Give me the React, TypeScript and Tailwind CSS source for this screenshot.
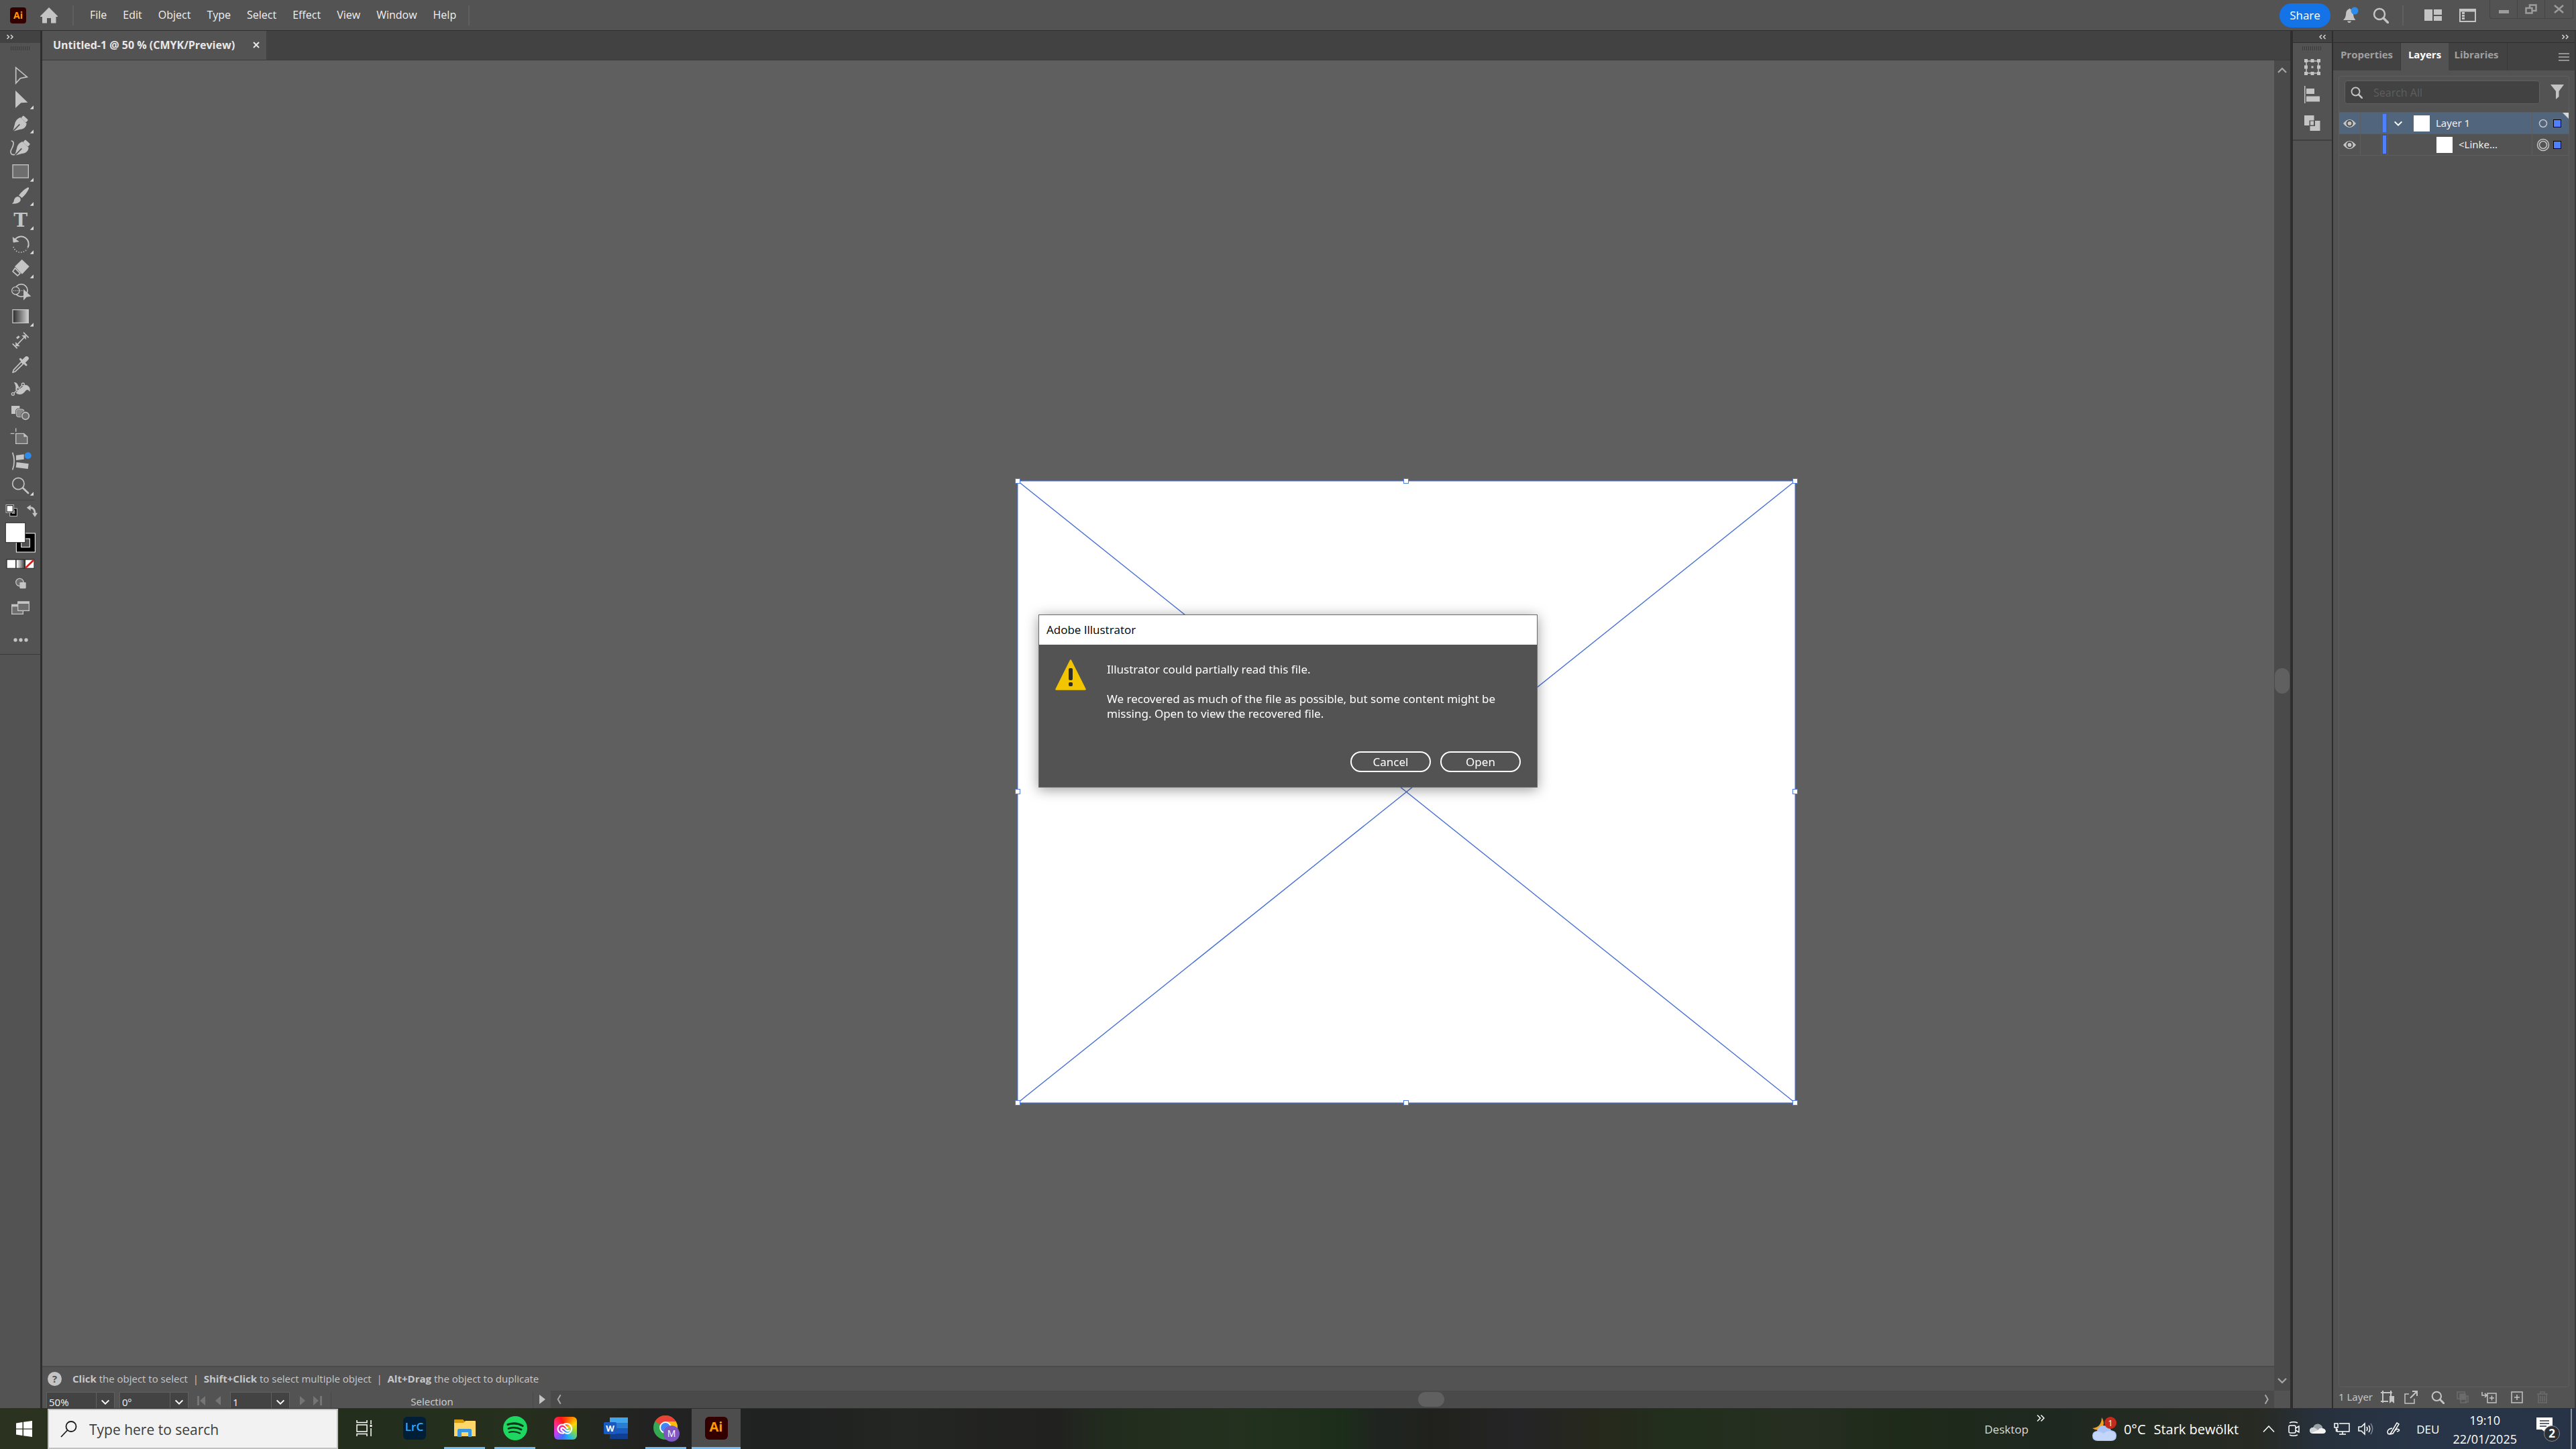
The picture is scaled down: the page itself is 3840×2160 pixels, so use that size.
import type { ReactNode } from "react";

const ICON = "#c4c4c4";

/* ---------- tool bar ---------- */

interface Tool {
  name: string;
  flyout?: boolean;
  icon: ReactNode;
}

const nib = (
  <>
    <path d="M91 27L119 54C117 72 106 79 88 81L57 90L66 58C68 43 77 33 91 27Z" fill={ICON} />
    <path d="M56 91L88 58" stroke="#535353" strokeWidth="5" />
    <rect x="-15" y="-8" width="30" height="16" rx="4" transform="translate(110 34) rotate(43)" fill={ICON} />
  </>
);

const TOOLS: Tool[] = [
  {
    name: "Selection",
    icon: <path d="M71 20V90L91 68L121 62Z" fill="none" stroke={ICON} strokeWidth="5" />,
  },
  {
    name: "Direct Selection",
    flyout: true,
    icon: <path d="M69 15V93L94 70L124 68Z" fill={ICON} />,
  },
  { name: "Pen", flyout: true, icon: nib },
  {
    name: "Curvature",
    icon: (
      <>
        <g transform="translate(9 0)">{nib}</g>
        <path d="M50 24C66 24 60 46 53 58C43 74 48 90 66 85" fill="none" stroke={ICON} strokeWidth="5" />
      </>
    ),
  },
  {
    name: "Rectangle",
    flyout: true,
    icon: <rect x="57" y="23" width="70" height="58" fill="#6e6e6e" stroke={ICON} strokeWidth="4" />,
  },
  {
    name: "Paintbrush",
    flyout: true,
    icon: (
      <g fill={ICON}>
        <path d="M125 16Q131 16 129 22Q118 46 98 63L84 52Q102 28 125 16Z" />
        <path d="M80 57Q94 60 92 74Q86 90 54 89Q63 82 63 72Q67 58 80 57Z" />
      </g>
    ),
  },
  {
    name: "Type",
    flyout: true,
    icon: (
      <text x="92" y="83" textAnchor="middle" fontFamily="DejaVu Serif, serif" fontWeight="bold" fontSize="84" fill={ICON}>
        T
      </text>
    ),
  },
  {
    name: "Rotate",
    flyout: true,
    icon: (
      <>
        <path d="M68 32A34 34 0 0 1 124 70" fill="none" stroke={ICON} strokeWidth="6" />
        <path d="M57 23L60 46L84 42Z" fill={ICON} stroke={ICON} strokeWidth="2" />
        <path d="M60 66A34 34 0 0 0 122 74" fill="none" stroke={ICON} strokeWidth="5" strokeDasharray="4 7" />
      </>
    ),
  },
  {
    name: "Eraser",
    flyout: true,
    icon: (
      <>
        <path d="M98 14L131 46L99 80L66 46Z" fill={ICON} />
        <path d="M67 53L90 76L79 87L57 68Z" fill="none" stroke={ICON} strokeWidth="5" strokeLinejoin="round" />
      </>
    ),
  },
  {
    name: "Shape Builder",
    icon: (
      <>
        <circle cx="95" cy="45" r="28" fill="none" stroke={ICON} strokeWidth="5" />
        <circle cx="70" cy="46" r="17" fill="#535353" stroke={ICON} strokeWidth="4" />
        <path d="M60 46H108" stroke={ICON} strokeWidth="4" strokeDasharray="4 5" />
        <path d="M105 39V89L119 74L139 71Z" fill={ICON} />
      </>
    ),
  },
  {
    name: "Gradient",
    flyout: true,
    icon: (
      <>
        <linearGradient id="tool-gradient">
          <stop offset="0" stopColor="#2a2a2a" />
          <stop offset="1" stopColor="#d0d0d0" />
        </linearGradient>
        <rect x="57" y="23" width="70" height="59" fill="url(#tool-gradient)" stroke={ICON} strokeWidth="4" />
      </>
    ),
  },
  {
    name: "Dimension",
    icon: (
      <g stroke={ICON} fill={ICON}>
        <path d="M78 70L108 39" strokeWidth="5" />
        <path d="M70 78V60L88 78Z M116 30V48L98 30Z" strokeWidth="1" />
        <path d="M56 67L77 88M105 17L128 40" strokeWidth="5" />
        <path d="M75 43L86 34" strokeWidth="9" />
      </g>
    ),
  },
  {
    name: "Eyedropper",
    icon: (
      <>
        <path d="M101 34L61 76L57 88L69 83L110 43" fill="none" stroke={ICON} strokeWidth="5" strokeLinejoin="round" />
        <path d="M91 28L117 54" stroke={ICON} strokeWidth="9" strokeLinecap="round" />
        <path d="M104 40L119 25" stroke={ICON} strokeWidth="19" strokeLinecap="round" />
      </>
    ),
  },
  {
    name: "Puppet Warp",
    icon: (
      <>
        <path d="M62 24Q76 22 82 40Q88 56 102 42Q116 28 130 44Q136 52 133 66Q124 50 114 62Q98 84 78 76Q64 70 70 52Q72 36 62 24Z" fill={ICON} />
        <path d="M60 74L102 34" stroke="#535353" strokeWidth="9" />
        <path d="M60 74L102 34" stroke={ICON} strokeWidth="4" />
        <circle cx="103" cy="33" r="6" fill="#535353" stroke={ICON} strokeWidth="4" />
        <circle cx="80" cy="54" r="6" fill="#535353" stroke={ICON} strokeWidth="4" />
        <circle cx="58" cy="76" r="6" fill="#535353" stroke={ICON} strokeWidth="4" />
      </>
    ),
  },
  {
    name: "Blend",
    icon: (
      <>
        <rect x="51" y="21" width="37" height="36" fill={ICON} />
        <rect x="73" y="36" width="35" height="35" rx="10" fill="#8a8a8a" stroke="#535353" strokeWidth="8" />
        <rect x="73" y="36" width="35" height="35" rx="10" fill="#8a8a8a" stroke={ICON} strokeWidth="3" />
        <circle cx="114" cy="66" r="21" fill="#535353" />
        <circle cx="114" cy="66" r="16" fill="#6e6e6e" stroke={ICON} strokeWidth="5" />
      </>
    ),
  },
  {
    name: "Artboard",
    icon: (
      <>
        <path d="M71 13V29M47 37H64" stroke={ICON} strokeWidth="4" />
        <path d="M71 37H107L122 51V82H71Z" fill="#6e6e6e" stroke={ICON} strokeWidth="4" />
        <path d="M106 37V52H122Z" fill={ICON} />
      </>
    ),
  },
  {
    name: "Perspective",
    icon: (
      <>
        <path d="M56 14Q71 52 56 91" fill="none" stroke={ICON} strokeWidth="5" />
        <path d="M72 26L107 22V44L72 48ZM74 57L128 64L125 87L71 80Z" fill={ICON} />
        <circle cx="125" cy="28" r="15" fill="#2d8ceb" />
      </>
    ),
  },
  {
    name: "Zoom",
    flyout: true,
    icon: (
      <>
        <circle cx="82" cy="45" r="26" fill="none" stroke={ICON} strokeWidth="5" />
        <path d="M102 64L126 87" stroke={ICON} strokeWidth="8" strokeLinecap="round" />
      </>
    ),
  },
];

function ToolBar() {
  return (
    <aside className="flex w-[63px] shrink-0 flex-col border-r-[3px] border-[#2e2e2e] bg-[#535353]">
      <div className="flex h-[18px] shrink-0 items-center bg-[#424242] pl-[9px]">
        <DoubleChevron />
      </div>
      <div className="flex h-[30px] shrink-0 justify-center pt-[5px]">
        <Grip />
      </div>
      {TOOLS.map((tool) => (
        <button key={tool.name} type="button" aria-label={tool.name} className="h-9 shrink-0">
          <svg viewBox="0 0 180 108" className="h-9 w-[60px]">
            {tool.icon}
            {tool.flyout && <path d="M150 82V98H134Z" fill="#dcdcdc" />}
          </svg>
        </button>
      ))}
      <div className="mx-2 mt-[3px] h-px shrink-0 bg-[#454545]" />
      <svg viewBox="0 0 180 84" className="h-7 w-[60px] shrink-0">
        <rect x="44" y="36" width="32" height="34" fill="#000" stroke={ICON} strokeWidth="3" />
        <rect x="55" y="45" width="11" height="13" fill="#535353" stroke={ICON} strokeWidth="2" />
        <rect x="27" y="20" width="34" height="34" fill="#fff" stroke={ICON} strokeWidth="3" />
        <rect x="30" y="23" width="28" height="28" fill="#fff" stroke="#000" strokeWidth="3" />
        <path d="M134 32Q156 32 156 58" fill="none" stroke={ICON} strokeWidth="8" />
        <path d="M119 32L137 20V46ZM144 56H168L156 74Z" fill={ICON} />
      </svg>
      <svg viewBox="0 0 180 162" className="h-[54px] w-[60px] shrink-0">
        <rect x="73" y="63" width="84" height="84" fill="#000" stroke="#fff" strokeWidth="3" />
        <rect x="95" y="87" width="38" height="38" fill="#535353" stroke="#fff" strokeWidth="3" />
        <rect x="25" y="16" width="88" height="88" fill="#fff" stroke="#303030" strokeWidth="3" />
      </svg>
      <svg viewBox="0 0 180 72" className="h-6 w-[60px] shrink-0">
        <linearGradient id="mode-gradient">
          <stop offset="0" stopColor="#fff" />
          <stop offset="1" stopColor="#444" />
        </linearGradient>
        <rect x="28" y="16" width="126" height="43" fill="#303030" />
        <rect x="32" y="20" width="37" height="36" fill="#fff" />
        <rect x="74" y="20" width="35" height="36" fill="url(#mode-gradient)" />
        <rect x="114" y="20" width="37" height="36" fill="#fff" />
        <path d="M115 55L150 21" stroke="#f01010" strokeWidth="8" />
      </svg>
      <button type="button" aria-label="Drawing mode" className="h-9 shrink-0">
        <svg viewBox="0 0 180 108" className="h-9 w-[60px]">
          <circle cx="88" cy="48" r="17" fill="#6e6e6e" stroke={ICON} strokeWidth="4" />
          <rect x="88" y="48" width="28" height="28" rx="4" fill={ICON} />
        </svg>
      </button>
      <button type="button" aria-label="Screen mode" className="h-9 shrink-0">
        <svg viewBox="0 0 180 108" className="h-9 w-[60px]">
          <rect x="53" y="40" width="50" height="42" fill="#6e6e6e" stroke={ICON} strokeWidth="4" />
          <path d="M53 44H80" stroke={ICON} strokeWidth="10" />
          <rect x="80" y="27" width="50" height="40" fill="#6e6e6e" stroke={ICON} strokeWidth="4" />
          <path d="M80 31H130" stroke={ICON} strokeWidth="10" />
        </svg>
      </button>
      <button type="button" aria-label="Edit toolbar" className="h-[52px] shrink-0 border-b border-[#3a3a3a]">
        <svg viewBox="0 0 180 153" className="h-[51px] w-[60px]">
          <g fill={ICON}>
            <circle cx="69" cy="90" r="8" />
            <circle cx="93" cy="90" r="8" />
            <circle cx="117" cy="90" r="8" />
          </g>
        </svg>
      </button>
    </aside>
  );
}

function DoubleChevron({ left = false }: { left?: boolean }) {
  return (
    <svg viewBox="0 0 12 8" className="h-2 w-3">
      <path
        d={left ? "M5 1L2 4L5 7M10.500 1L7.500 4L10.500 7" : "M1.500 1L4.500 4L1.500 7M7 1L10 4L7 7"}
        fill="none"
        stroke="#d6d6d6"
        strokeWidth="1.500"
      />
    </svg>
  );
}

function Grip() {
  return (
    <svg viewBox="0 0 29 6" className="h-1.5 w-[29px]">
      <path d="M0 3H29" stroke="#3a3a3a" strokeWidth="6" strokeDasharray="1 2" />
    </svg>
  );
}

function Chevron({ dir, className }: { dir: "up" | "down" | "left" | "right"; className: string }) {
  const d = {
    up: "M2 8L6 4L10 8",
    down: "M2 4L6 8L10 4",
    left: "M8 1L5 6L8 11",
    right: "M5 1L8 6L5 11",
  }[dir];
  return (
    <svg viewBox="0 0 12 12" className={className}>
      <path d={d} fill="none" stroke="currentColor" strokeWidth="1.500" />
    </svg>
  );
}

function Magnifier({ className }: { className: string }) {
  return (
    <svg viewBox="0 0 24 24" className={className}>
      <circle cx="10" cy="10" r="8" fill="none" stroke="currentColor" strokeWidth="2.500" />
      <path d="M16 16L22.500 22.500" stroke="currentColor" strokeWidth="3.500" strokeLinecap="round" />
    </svg>
  );
}

/* ---------- title bar ---------- */

const MENUS = ["File", "Edit", "Object", "Type", "Select", "Effect", "View", "Window", "Help"];

function TitleBar() {
  return (
    <header className="flex h-[46px] shrink-0 items-center border-b border-[#2e2e2e] bg-[#535353]">
      <div className="ml-[15px] flex h-6 w-6 items-center justify-center rounded bg-[#330000] text-[14px] font-bold text-[#ff9a00]">
        Ai
      </div>
      <button type="button" aria-label="Home" className="ml-[21px]">
        <svg viewBox="0 0 26 24" className="h-6 w-[26px]" fill={ICON}>
          <path d="M13 0L26 13V14H23.500V23.500H16V16H10V23.500H3V14H0V13Z" />
        </svg>
      </button>
      <div className="ml-[22px] h-[30px] w-0.5 bg-[#5f5f5f]" />
      <nav className="ml-6 flex gap-6 pb-0.5 text-[16px] text-[#f0f0f0]">
        {MENUS.map((menu) => (
          <button key={menu} type="button">
            {menu}
          </button>
        ))}
      </nav>
      <div className="ml-[18px] h-[30px] w-0.5 bg-[#5f5f5f]" />

      <button type="button" className="ml-auto h-9 w-[76px] rounded-full bg-[#1473e6] text-[17px] text-white">
        Share
      </button>
      <button type="button" aria-label="Notifications" className="ml-[18px]">
        <svg viewBox="0 0 24 26" className="h-[26px] w-6">
          <path d="M9.500 3.500Q10.500 1.500 11.500 3.500Q16 5 16 11Q16 16 19.500 20H1Q5 16 5 11Q5 5 9.500 3.500Z" fill={ICON} />
          <path d="M7 21.500H13Q12 24 10 24Q8 24 7 21.500Z" fill={ICON} />
          <circle cx="18" cy="6" r="5.500" fill="#2d8ceb" />
        </svg>
      </button>
      <button type="button" aria-label="Search" className="ml-[21px] text-[#c4c4c4]">
        <Magnifier className="h-6 w-6" />
      </button>
      <div className="ml-5 h-[30px] w-0.5 bg-[#5f5f5f]" />
      <button type="button" aria-label="Arrange documents" className="ml-[31px]">
        <svg viewBox="0 0 26 18" className="h-[18px] w-[26px]" fill={ICON}>
          <rect width="12" height="17" />
          <rect x="14" width="12" height="8" />
          <rect x="14" y="10" width="12" height="7" />
        </svg>
      </button>
      <button type="button" aria-label="Workspace" className="ml-[26px]">
        <svg viewBox="0 0 25 20" className="h-5 w-[25px]">
          <path d="M1 1H24V19H1Z" fill="none" stroke={ICON} strokeWidth="2" />
          <path d="M1 3H24" stroke={ICON} strokeWidth="3" />
          <path d="M6 5V16" stroke={ICON} strokeWidth="4" strokeDasharray="3 1" />
        </svg>
      </button>
      <div className="mr-1 ml-5 flex h-7 self-start divide-x divide-[#454545] rounded-b border border-t-0 border-[#454545]">
        <button type="button" aria-label="Minimize" className="flex w-[41px] items-center justify-center">
          <svg viewBox="0 0 15 15" className="h-[15px] w-[15px]">
            <rect y="9" width="15" height="5" fill="#9c9c9c" />
          </svg>
        </button>
        <button type="button" aria-label="Restore" className="flex w-[41px] items-center justify-center">
          <svg viewBox="0 0 18 15" className="h-[15px] w-[18px]" fill="none" stroke="#9c9c9c" strokeWidth="2.500">
            <path d="M7 5V1.500H16.500V10H11" />
            <rect x="1.500" y="6" width="9" height="7.500" />
          </svg>
        </button>
        <button type="button" aria-label="Close" className="flex w-[41px] items-center justify-center">
          <svg viewBox="0 0 15 13" className="h-[13px] w-[15px]">
            <path d="M1 1L14 12M14 1L1 12" stroke="#9c9c9c" strokeWidth="2.500" />
          </svg>
        </button>
      </div>
    </header>
  );
}

/* ---------- document area ---------- */

const HANDLES = [
  [1, 1],
  [580, 1],
  [1160, 1],
  [1, 464],
  [1160, 464],
  [1, 928],
  [580, 928],
  [1160, 928],
];

function Canvas() {
  return (
    <div className="relative min-h-0 flex-1 overflow-hidden bg-[#5f5f5f]">
      <svg viewBox="0 0 1161 929" className="absolute top-[626px] left-[1453px] h-[929px] w-[1161px] overflow-visible">
        <rect x="1" y="1" width="1159" height="927" fill="#fff" stroke="#4f78dc" strokeWidth="1" />
        <path d="M1 1L1160 928M1160 1L1 928" stroke="#4a72d4" strokeWidth="1.400" />
        {HANDLES.map(([x, y]) => (
          <rect key={`${x}-${y}`} x={x - 3.5} y={y - 3.5} width="7" height="7" fill="#fff" stroke="#4f7be0" strokeWidth="1" />
        ))}
      </svg>
    </div>
  );
}

function Field({ label, value, className }: { label: string; value: string; className: string }) {
  return (
    <div className={`relative h-8 shrink-0 border border-[#606060] bg-[#434343] ${className}`}>
      <select aria-label={label} className="h-7 w-full appearance-none pl-[3px] text-[15px] text-[#f0f0f0] outline-none">
        <option>{value}</option>
      </select>
      <div className="pointer-events-none absolute inset-y-0 right-0 flex w-[27px] justify-center border-l border-[#606060] pt-1.5 text-white">
        <Chevron dir="down" className="h-4 w-4" />
      </div>
    </div>
  );
}

function StatusBar() {
  return (
    <div className="flex h-[26px] shrink-0 overflow-hidden bg-[#535353]">
      <div className="flex w-[758px] shrink-0 pt-0.5 pl-1.5">
        <Field label="Zoom level" value="50%" className="w-[102px]" />
        <Field label="Rotate view" value="0º" className="ml-[7px] w-[103px]" />
        <div className="flex w-[62px] shrink-0 gap-3 pt-1.5 pl-3 text-[#757575]">
          <svg viewBox="0 0 14 14" className="h-3.5 w-3.5" fill="currentColor">
            <path d="M1 0H4V14H1ZM13 0V14L5 7Z" />
          </svg>
          <svg viewBox="0 0 14 14" className="h-3.5 w-3.5" fill="currentColor">
            <path d="M10 0V14L2 7Z" />
          </svg>
        </div>
        <Field label="Artboard" value="1" className="w-[89px]" />
        <div className="flex w-[62px] shrink-0 gap-2 border-r border-[#4a4a4a] pt-1.5 pl-[13px] text-[#757575]">
          <svg viewBox="0 0 14 14" className="h-3.5 w-3.5" fill="currentColor">
            <path d="M2 0V14L10 7Z" />
          </svg>
          <svg viewBox="0 0 14 14" className="h-3.5 w-3.5" fill="currentColor">
            <path d="M0 0V14L8 7ZM10 0H13V14H10Z" />
          </svg>
        </div>
        <div className="flex-1 pt-1 text-center text-[15px] leading-5 text-[#d0d0d0]">Selection</div>
        <div className="flex w-[27px] shrink-0 justify-center border-l border-[#4a4a4a] pt-1">
          <svg viewBox="0 0 9 14" className="h-3.5 w-[9px]">
            <path d="M0 0L9 7L0 14Z" fill={ICON} />
          </svg>
        </div>
      </div>
      <div className="flex flex-1 items-center bg-[#4a4a4a] pr-1 pl-1 text-[#a8a8a8]">
        <Chevron dir="left" className="h-4 w-4" />
        <div className="grow-[1271]" />
        <div className="h-[22px] w-[39px] rounded-full bg-[#606060]" />
        <div className="grow-[1215]" />
        <Chevron dir="right" className="h-4 w-4" />
      </div>
      <div className="w-6 shrink-0" />
    </div>
  );
}

function DocumentArea() {
  return (
    <main className="flex min-w-0 flex-1 flex-col bg-[#424242]">
      <div className="flex h-11 shrink-0 border-b border-[#3a3a3a]">
        <div className="flex w-[334px] items-center justify-between bg-[#535353] pr-[9px] pb-0.5 pl-4">
          <span className="text-[16px] font-bold whitespace-nowrap text-[#e8e8e8]">Untitled-1 @ 50 % (CMYK/Preview)</span>
          <button type="button" aria-label="Close document">
            <svg viewBox="0 0 12 12" className="h-3 w-3">
              <path d="M2 2L10 10M10 2L2 10" stroke="#e8e8e8" strokeWidth="2" />
            </svg>
          </button>
        </div>
      </div>
      <div className="flex min-h-0 flex-1">
        <div className="flex min-w-0 flex-1 flex-col">
          <Canvas />
          <div className="flex h-[37px] shrink-0 items-center border-t-2 border-[#4a4a4a] bg-[#535353] pl-2 text-[15px] text-[#c8c8c8]">
            <span className="mr-4 flex h-[21px] w-[21px] items-center justify-center rounded-full bg-[#c4c4c4] font-bold text-[#535353]">
              ?
            </span>
            <p className="whitespace-pre">
              <b>Click</b> the object to select{"  |  "}
              <b>Shift+Click</b> to select multiple object{"  |  "}
              <b>Alt+Drag</b> the object to duplicate
            </p>
          </div>
        </div>
        <div className="flex w-6 shrink-0 flex-col items-center bg-[#4a4a4a] py-1.5 text-[#a8a8a8]">
          <Chevron dir="up" className="h-[18px] w-[18px]" />
          <div className="grow-[880]" />
          <div className="h-[38px] w-[22px] rounded-full bg-[#606060]" />
          <div className="grow-[1013]" />
          <Chevron dir="down" className="h-[18px] w-[18px]" />
        </div>
      </div>
      <StatusBar />
    </main>
  );
}

/* ---------- docked panels ---------- */

function IconDock() {
  return (
    <aside className="flex w-16 shrink-0 flex-col border-r-2 border-l-4 border-[#2e2e2e] bg-[#535353]">
      <div className="flex h-[18px] shrink-0 items-center justify-end border-b border-[#2e2e2e] bg-[#424242] pr-2">
        <DoubleChevron left />
      </div>
      <div className="flex h-[146px] flex-col items-center border-b-2 border-[#404040] pt-[5px] pr-px">
        <Grip />
        <svg viewBox="0 0 24 24" className="mt-[13px] h-6 w-6" fill={ICON}>
          <path d="M3 3H21V21H3Z" fill="none" stroke={ICON} strokeWidth="1.500" />
          <path d="M0 0H5V5H0ZM9.500 0H14.500V5H9.500ZM19 0H24V5H19ZM0 9.500H5V14.500H0ZM19 9.500H24V14.500H19ZM0 19H5V24H0ZM9.500 19H14.500V24H9.500ZM19 19H24V24H19Z" />
          <path d="M10.500 10.500H13.500V13.500H10.500Z" />
        </svg>
        <svg viewBox="0 0 24 26" className="mt-4 h-[26px] w-6" fill={ICON}>
          <path d="M0 0H1.500V26H0ZM3 4H15V12H3ZM3 15.500H23V23.500H3Z" />
        </svg>
        <svg viewBox="0 0 24 24" className="mt-[18px] h-6 w-6">
          <path d="M0 0H14.500V7.500H7.500V15H0Z" fill={ICON} />
          <path d="M16 8H23.500V23H8.500V16H16Z" fill={ICON} />
          <rect x="9" y="8.500" width="5" height="6" fill={ICON} />
        </svg>
      </div>
    </aside>
  );
}

function Eye() {
  return (
    <svg viewBox="0 0 19 12" className="h-3 w-[19px]">
      <path d="M0 6Q9.500 -6 19 6Q9.500 18 0 6Z" fill={ICON} />
      <circle cx="9.500" cy="6" r="4" fill="none" stroke="#4a4a4a" strokeWidth="2" />
    </svg>
  );
}

interface LayerRowProps {
  name: string;
  child?: boolean;
}

function LayerRow({ name, child = false }: LayerRowProps) {
  return (
    <li
      className={`relative flex h-8 items-stretch border-b border-[#5e5e5e] ${child ? "bg-[#535353]" : "bg-[#51657d]"}`}
    >
      <button type="button" aria-label={`Toggle visibility of ${name}`} className="flex w-8 items-center justify-center border-r border-[#5e5e5e]">
        <Eye />
      </button>
      <span className="w-[31px] border-r border-[#5e5e5e]" />
      <span className="mx-0.5 my-0.5 w-[5px] bg-[#4f80ff]" />
      <span className="flex flex-1 items-center border-x border-[#5e5e5e] font-['Noto_Sans',sans-serif] text-[15px] text-[#f0f0f0]">
        <span className={`flex justify-center text-white ${child ? "w-[72px]" : "w-[38px] pr-2"}`}>
          {!child && <Chevron dir="down" className="h-4 w-4" />}
        </span>
        <span className="mr-[9px] h-6 w-6 bg-white" />
        {name}
      </span>
      <span className="flex w-[54px] items-center pl-1.5">
        <svg viewBox="0 0 20 20" className="h-5 w-5" fill="none" stroke={ICON} strokeWidth="1.500">
          <circle cx="10" cy="10" r="5.500" />
          {child && <circle cx="10" cy="10" r="8.500" />}
        </svg>
        <span className="ml-[5px] h-3 w-3 border border-black bg-[#4f80ff]" />
      </span>
      {!child && (
        <svg viewBox="0 0 9 9" className="absolute top-0 right-0 h-[9px] w-[9px]">
          <path d="M0 0H9V9Z" fill="#d8d8d8" />
        </svg>
      )}
    </li>
  );
}

function LayersPanel() {
  return (
    <aside className="flex w-[362px] shrink-0 flex-col border-r-2 border-[#3a3a3a] bg-[#535353]">
      <div className="flex h-[18px] shrink-0 items-center justify-end border-b border-[#2e2e2e] bg-[#424242] pr-2">
        <DoubleChevron />
      </div>
      <div className="flex h-[41px] shrink-0 bg-[#424242] text-[15px] font-bold text-[#a0a0a0]">
        <button type="button" className="w-[101px] border-r border-[#383838] pb-1.5">
          Properties
        </button>
        <button type="button" className="w-[71px] bg-[#535353] pb-1.5 text-white">
          Layers
        </button>
        <button type="button" className="w-[88px] border-r border-[#383838] pr-1 pb-1.5">
          Libraries
        </button>
        <button type="button" aria-label="Panel menu" className="mr-2 ml-auto">
          <svg viewBox="0 0 16 12" className="h-3 w-4">
            <path d="M0 1H16M0 6H16M0 11H16" stroke="#b0b0b0" strokeWidth="1.500" />
          </svg>
        </button>
      </div>
      <div className="mx-2 mt-2 flex min-h-0 flex-1 flex-col rounded border border-[#5e5e5e]">
        <div className="flex h-[53px] shrink-0 items-start pt-1.5 pr-[7px] pl-2">
          <label className="flex h-[35px] flex-1 items-center rounded border border-[#606060] bg-[#424242] pl-2 text-[#c4c4c4]">
            <Magnifier className="h-[18px] w-[18px]" />
            <input
              type="search"
              aria-label="Search layers"
              placeholder="Search All"
              className="ml-4 w-0 flex-1 bg-transparent text-[16px] outline-none placeholder:text-[#5e5e5e]"
            />
          </label>
          <button type="button" aria-label="Filter layers" className="mt-1.5 ml-4">
            <svg viewBox="0 0 20 22" className="h-[22px] w-5">
              <path d="M0 0H20L12.500 10V18L8 22V10Z" fill={ICON} />
            </svg>
          </button>
        </div>
        <ul className="border-t border-[#5e5e5e]">
          <LayerRow name="Layer 1" />
          <LayerRow name="<Linke..." child />
        </ul>
      </div>
      <div className="flex h-[31px] shrink-0 items-center pb-0.5 pl-2 text-[#c4c4c4]">
        <span className="w-[63px] font-['Noto_Sans',sans-serif] text-[15px] whitespace-nowrap">1 Layer</span>
        <svg viewBox="0 0 20 20" className="h-5 w-5" fill="none" stroke="currentColor" strokeWidth="2">
          <path d="M3 0V18M0 3H17M15 0V9M0 16H11" />
          <path d="M13 8H20V19L16.500 16L13 19Z" fill="currentColor" stroke="none" />
        </svg>
        <svg viewBox="0 0 20 20" className="ml-[15px] h-5 w-5" fill="none" stroke="currentColor" strokeWidth="1.500">
          <path d="M7 5H1V19H15V12" />
          <path d="M9 11L18 2M12 1H19V8" strokeWidth="2" />
        </svg>
        <span className="ml-5">
          <Magnifier className="h-5 w-5" />
        </span>
        <svg viewBox="0 0 18 18" className="ml-[18px] h-[18px] w-[18px]" fill="none" stroke="#6c6c6c" strokeWidth="1.500">
          <path d="M5 11H1V1H12V5M12 16H17V7H14V17H6V12" />
          <rect x="5" y="4" width="8" height="8" fill="#6c6c6c" />
        </svg>
        <svg viewBox="0 0 24 18" className="ml-[19px] h-[18px] w-6" fill="none" stroke="currentColor" strokeWidth="1.500">
          <rect x="9" y="3" width="13" height="14" />
          <path d="M1 1V6H8M5 3L8 6L5 9M12 10H19M15.500 6.500V13.500" />
        </svg>
        <svg viewBox="0 0 18 18" className="ml-5 h-[18px] w-[18px]" fill="none" stroke="currentColor" strokeWidth="1.500">
          <rect x="1" y="1" width="16" height="16" />
          <path d="M5 9H13M9 5V13" />
        </svg>
        <svg viewBox="0 0 18 18" className="ml-5 h-[18px] w-[18px]" fill="none" stroke="#6c6c6c" strokeWidth="1.500">
          <path d="M1 4H17M6 4V1H12V4M3 5V17H15V5M6 7V15M9 7V15M12 7V15" />
        </svg>
      </div>
    </aside>
  );
}

/* ---------- dialog ---------- */

function RecoveryDialog() {
  return (
    <div className="pointer-events-none fixed inset-0 flex items-center justify-center pb-[70px]">
      <div
        role="dialog"
        aria-labelledby="dialog-title"
        className="pointer-events-auto flex h-[258px] w-[744px] flex-col border border-[#6a6a6a] bg-[#535353] shadow-[0_3px_18px_rgba(0,0,0,0.4)]"
      >
        <h1 id="dialog-title" className="flex h-11 shrink-0 items-center bg-white pl-[11px] text-[17px] text-black">
          Adobe Illustrator
        </h1>
        <div className="flex flex-1 pt-[22px] pl-6 text-white">
          <svg viewBox="0 0 46 46" className="h-[46px] w-[46px]">
            <path d="M23 1.500L44.500 44.500H1.500Z" fill="#f2c500" stroke="#f2c500" strokeWidth="2.500" strokeLinejoin="round" />
            <rect x="20" y="13" width="6" height="18" rx="2" fill="#2c2c20" />
            <rect x="20" y="34" width="6" height="6" rx="2" fill="#2c2c20" />
          </svg>
          <div className="pt-1 pl-[31px] font-['Noto_Sans',sans-serif] text-[17px] leading-[22px] whitespace-nowrap">
            <p>Illustrator could partially read this file.</p>
            <p className="mt-[22px]">
              We recovered as much of the file as possible, but some content might be
              <br />
              missing. Open to view the recovered file.
            </p>
          </div>
        </div>
        <div className="flex justify-end gap-[14px] pr-6 pb-[22px] font-['Noto_Sans',sans-serif] text-[17px] text-white">
          <button type="button" className="h-[31px] w-[120px] rounded-full border-2 border-white leading-none">
            Cancel
          </button>
          <button type="button" className="h-[31px] w-[120px] rounded-full border-2 border-white leading-none">
            Open
          </button>
        </div>
      </div>
    </div>
  );
}

/* ---------- taskbar ---------- */

interface TaskApp {
  name: string;
  running?: boolean;
  active?: boolean;
  icon: ReactNode;
}

const APPS: TaskApp[] = [
  {
    name: "Task View",
    icon: (
      <svg viewBox="0 0 24 24" className="h-6 w-6" fill="none" stroke="#fff" strokeWidth="1.500">
        <path d="M1 0V3.500H16V0M1 24V20.500H16V24M1 7H16V17H1ZM22 0V6M22 12V24" />
        <path d="M22 7V10" strokeWidth="3" />
      </svg>
    ),
  },
  {
    name: "Lightroom Classic",
    icon: (
      <span className="flex h-[34px] w-[34px] items-center justify-center rounded-md bg-[#001e36] pb-1 text-[17px] font-semibold text-[#31a8ff]">
        LrC
      </span>
    ),
  },
  {
    name: "File Explorer",
    running: true,
    icon: (
      <svg viewBox="0 0 32 28" className="h-7 w-8">
        <path d="M0 2Q0 1 1 1H13L16 4V8H0Z" fill="#d99a0b" />
        <path d="M0 6H14L17 3H31Q32 3 32 4V26H0Z" fill="#ffd667" />
        <path d="M5 27V17Q5 15 7 15H24Q26 15 26 17V27H21V20H11V27Z" fill="#3a96dd" />
      </svg>
    ),
  },
  {
    name: "Spotify",
    running: true,
    icon: (
      <svg viewBox="0 0 36 36" className="h-9 w-9">
        <circle cx="18" cy="18" r="18" fill="#1ed760" />
        <g fill="none" stroke="#10331c" strokeLinecap="round">
          <path d="M7 12.500Q19 8.500 29 14.500" strokeWidth="3.200" />
          <path d="M8 18.500Q18 15 27 20" strokeWidth="2.800" />
          <path d="M9 24Q17 21.500 25 25.500" strokeWidth="2.300" />
        </g>
      </svg>
    ),
  },
  {
    name: "Creative Cloud",
    icon: (
      <span className="flex h-[34px] w-[34px] items-center justify-center rounded-md bg-[conic-gradient(from_20deg,#ff6a00,#ffd400,#8bd83a,#21b8e8,#3f6cff,#d03cf0,#ff2f8a,#ff1616,#ff6a00)]">
        <svg viewBox="0 0 26 22" className="h-[22px] w-[26px]" fill="none" stroke="#fff" strokeWidth="2.200" strokeLinecap="round">
          <path d="M10 18.500H8A6.500 6.500 0 0 1 8 5.500Q10.500 5.500 12.500 7.500L16 11" />
          <path d="M18.500 14.500Q15.500 16 13 13.500L10.500 11Q8.500 9.500 7 11Q5.500 13 7.500 14.500L11 17Q14 19.500 18 18.500A7.500 7.500 0 1 0 11 5" />
        </svg>
      </span>
    ),
  },
  {
    name: "Word",
    icon: (
      <svg viewBox="0 0 36 32" className="h-8 w-9">
        <path d="M9 0H36V8H9Z" fill="#41a5ee" />
        <path d="M9 8H36V16H9Z" fill="#2b7cd3" />
        <path d="M9 16H36V24H9Z" fill="#185abd" />
        <path d="M9 24H36V32H9Z" fill="#103f91" />
        <rect y="7" width="19" height="18" rx="2" fill="#185abd" />
        <text x="9.500" y="21" textAnchor="middle" fontFamily="Open Sans, sans-serif" fontWeight="bold" fontSize="13" fill="#fff">
          W
        </text>
      </svg>
    ),
  },
  {
    name: "Chrome",
    running: true,
    icon: (
      <svg viewBox="0 0 40 40" className="h-10 w-10">
        <circle cx="19" cy="19" r="18" fill="#34a853" />
        <path d="M19 19L3.400 10A18 18 0 0 1 34.600 10Z" fill="#ea4335" />
        <path d="M19 10H34.600A18 18 0 0 1 19 37L26 23Z" fill="#fbbc05" />
        <circle cx="19" cy="19" r="9" fill="#fff" />
        <circle cx="19" cy="19" r="7" fill="#4285f4" />
        <circle cx="28" cy="28" r="12" fill="#7e57c2" />
        <text x="28" y="33" textAnchor="middle" fontFamily="Open Sans, sans-serif" fontSize="14" fill="#fff">
          M
        </text>
      </svg>
    ),
  },
  {
    name: "Illustrator",
    active: true,
    icon: (
      <span className="flex h-[34px] w-[34px] items-center justify-center rounded-md bg-[#330000] pb-1 text-[20px] font-bold text-[#ff9a00]">
        Ai
      </span>
    ),
  },
];

function SystemTray() {
  return (
    <div className="ml-auto flex items-center text-white">
      <span className="pt-0.5 text-[17px] text-[#d8dcd6]">Desktop</span>
      <svg viewBox="0 0 12 10" className="mb-8 ml-3 h-2.5 w-3">
        <path d="M1 0.500L5.500 5L1 9.500M6.500 0.500L11 5L6.500 9.500" fill="none" stroke="#fff" strokeWidth="1.500" />
      </svg>
      <svg viewBox="0 0 38 36" className="ml-[70px] h-9 w-[38px]">
        <path d="M15 1Q22 12 12 19Q7 21 1 17Q10 16 13 10Q15 6 15 1Z" fill="#f0a020" />
        <path d="M9 36Q1 36 1 28Q1 22 8 21Q10 13 18 13Q26 13 29 20Q37 21 37 28Q37 36 29 36Z" fill="#a9c4f5" />
        <path d="M9 35Q2 34 2 28Q3 22 9 22Q14 22 18 25Q24 19 30 22Q36 24 36 29Q34 35 29 35Z" fill="#c3d6fa" />
        <circle cx="28" cy="9" r="9" fill="#c42b1c" />
        <text x="28" y="14" textAnchor="middle" fontFamily="Open Sans, sans-serif" fontSize="13" fill="#fff">
          1
        </text>
      </svg>
      <span className="ml-[10px] pt-0.5 text-[20px] whitespace-nowrap">0°C</span>
      <span className="ml-3 pt-0.5 text-[20px] whitespace-nowrap">Stark bewölkt</span>
      <svg viewBox="0 0 18 10" className="ml-9 h-2.5 w-[18px]">
        <path d="M1 9.500L9 1L17 9.500" fill="none" stroke="#fff" strokeWidth="1.500" />
      </svg>
      <svg viewBox="0 0 17 22" className="ml-5 h-[22px] w-[17px]" fill="none" stroke="#fff" strokeWidth="1.500">
        <rect x="1" y="6" width="10" height="11" rx="2" />
        <path d="M11 10L16 7V16L11 13M2 2Q8 -0.500 14 2M2 20Q8 22.500 14 20" />
      </svg>
      <svg viewBox="0 0 24 16" className="ml-[15px] h-4 w-6">
        <path d="M5 15Q0 15 0 10Q1 6 5 6Q8 0 14 1Q19 3 19 7Q24 8 24 12Q23 15 20 15Z" fill="#f4f4f4" />
        <path d="M5 6Q8 0 14 1Q19 3 19 7Q15 6 12 10L5 6Z" fill="#9a9fa6" />
        <path d="M0 10Q1 6 5 6Q9 6 12 10L3 14Q0 13 0 10Z" fill="#cfd2d6" />
      </svg>
      <svg viewBox="0 0 24 18" className="ml-3 h-[18px] w-6" fill="none" stroke="#fff" strokeWidth="1.500">
        <path d="M8 1H23V13H5V9M8 17H18M13 13V17M1 1H6V7H1ZM3.500 7V13" />
      </svg>
      <svg viewBox="0 0 24 20" className="ml-3 h-5 w-6" fill="none" stroke="#fff" strokeWidth="1.500">
        <path d="M1 7H5L10 2V18L5 13H1Z" />
        <path d="M13 7Q15 10 13 13M16 5Q19.500 10 16 15" />
        <path d="M19 2Q24.500 10 19 18" stroke="#7d8590" />
      </svg>
      <svg viewBox="0 0 20 20" className="ml-[19px] h-5 w-5" fill="none" stroke="#fff" strokeWidth="1.500">
        <path d="M6 16L15 1L18 3L9 17L5 18Z" />
        <path d="M8 9Q1 10 1 15Q2 20 6 16M12 13Q14 9 18 11Q20 13 15 14" />
      </svg>
      <span className="ml-6 pt-0.5 text-[17px]">DEU</span>
      <time className="ml-5 pt-0.5 text-center text-[18px] leading-7 whitespace-nowrap">
        19:10
        <br />
        22/01/2025
      </time>
      <button type="button" aria-label="Notifications" className="ml-7">
        <svg viewBox="0 0 36 38" className="h-[38px] w-9">
          <path d="M1 2H25V20H14V24L9 20H1Z" fill="#fff" />
          <path d="M6 7H20M6 11H20M6 15H16" stroke="#2a3645" strokeWidth="1.500" />
          <circle cx="24" cy="26" r="11.500" fill="#2b2e33" stroke="#8a8f96" />
          <text x="24" y="32" textAnchor="middle" fontFamily="Open Sans, sans-serif" fontWeight="bold" fontSize="17" fill="#fff">
            2
          </text>
        </svg>
      </button>
      <span className="mr-1.5 ml-4 h-[60px] w-0.5 bg-[#8a93a0]" />
    </div>
  );
}

function Taskbar() {
  return (
    <footer className="flex h-[60px] shrink-0 items-center bg-[linear-gradient(90deg,#2b3320_0%,#222d1c_12%,#26301d_20%,#222222_25%,#202121_31%,#232622_35%,#212120_41%,#222c1e_43%,#24311f_48%,#1c2e1a_52%,#1f2420_53.500%,#21211d_56%,#252527_59%,#26281c_62%,#222f1c_65%,#262e21_70%,#1e2a1a_74%,#1f2820_80%,#252b22_85%,#272a22_87.500%,#27313d_90%,#283548_94%,#273346_100%)]">
      <button type="button" aria-label="Start" className="flex w-[71px] items-center justify-center">
        <svg viewBox="0 0 24 24" className="h-6 w-6" fill="#fff">
          <path d="M0 3.500L9.500 2V11.400H0ZM11 1.800L24 0V11.400H11ZM0 12.700H9.500V22L0 20.600ZM11 12.700H24V24L11 22.200Z" />
        </svg>
      </button>
      <label className="flex h-full w-[433px] items-center border-2 border-[#c0c0c0] bg-[#f2f2f2] pl-[17px]">
        <svg viewBox="0 0 25 25" className="h-[25px] w-[25px]" fill="none" stroke="#1a1a1a" strokeWidth="1.800">
          <circle cx="16" cy="8.500" r="7.500" />
          <path d="M10.500 14L1 24" />
        </svg>
        <input
          type="search"
          aria-label="Search Windows"
          placeholder="Type here to search"
          className="ml-[18px] w-0 flex-1 bg-transparent pt-1 text-[21px] outline-none placeholder:text-[#3c3c3c]"
        />
      </label>
      <div className="flex h-full gap-0.5 pl-0.5">
        {APPS.map((app) => (
          <button
            key={app.name}
            type="button"
            aria-label={app.name}
            className={`relative flex w-[73px] items-center justify-center pb-0.5 ${app.active ? "bg-[#4d4d4d]" : ""}`}
          >
            {app.icon}
            {(app.running || app.active) && (
              <span className={`absolute bottom-0 h-[3px] bg-[#76b9ed] ${app.active ? "inset-x-0" : "inset-x-1.5"}`} />
            )}
          </button>
        ))}
      </div>
      <SystemTray />
    </footer>
  );
}

export default function App() {
  return (
    <div className="flex h-screen flex-col overflow-hidden bg-[#424242] font-['Open_Sans',sans-serif]">
      <TitleBar />
      <div className="flex min-h-0 flex-1 border-b border-[#2e2e2e]">
        <ToolBar />
        <DocumentArea />
        <IconDock />
        <LayersPanel />
      </div>
      <Taskbar />
      <RecoveryDialog />
    </div>
  );
}
